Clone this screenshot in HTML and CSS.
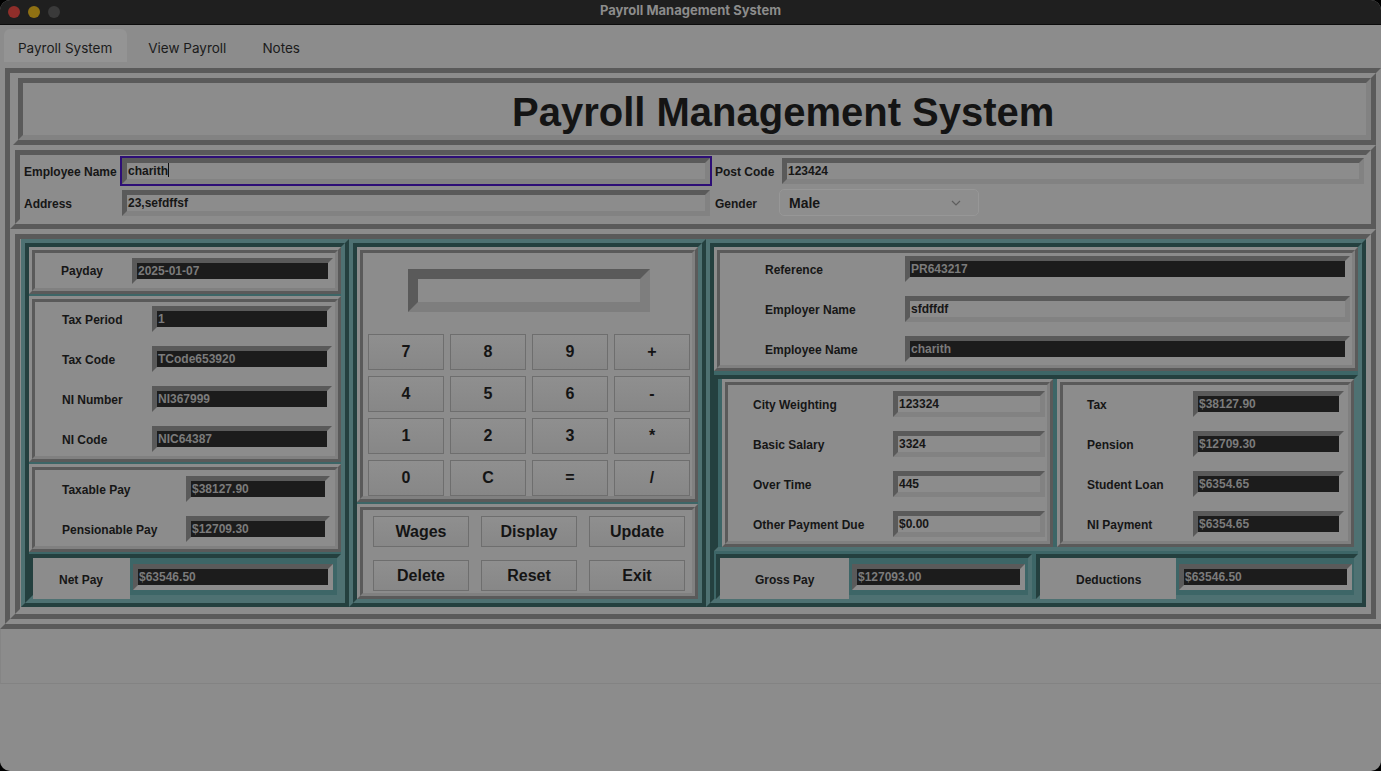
FILE: index.html
```html
<!DOCTYPE html>
<html>
<head>
<meta charset="utf-8">
<title>Payroll Management System</title>
<link rel="stylesheet" href="styles.css">
</head>
<body>
<div class="window">
  <div class="titlebar">
    <div class="lights"><span class="tl tl-red"></span><span class="tl tl-yel"></span><span class="tl tl-gry"></span></div>
    <div class="wtitle">Payroll Management System</div>
  </div>
  <div class="tabs">
    <div class="tab active">Payroll System</div>
    <div class="tab">View Payroll</div>
    <div class="tab">Notes</div>
  </div>
  <div class="main raised"><div class="main-in sunken">
    <div class="hdr raised"><div class="hdr-in sunken"><h1 class="title">Payroll Management System</h1></div></div>

    <div class="emp raised"><div class="emp-in sunken">
      <div class="lbl lbl-a">Employee Name</div>
      <div class="hl focus"><div class="e e-wide">charith<span class="caret"></span></div></div>
      <div class="lbl lbl-b">Post Code</div>
      <div class="hl"><div class="e e-pc">123424</div></div>
      <div class="lbl lbl-a">Address</div>
      <div class="hl"><div class="e e-wide">23,sefdffsf</div></div>
      <div class="lbl lbl-b">Gender</div>
      <div class="combo"><span>Male</span><svg class="chev" width="10" height="6" viewBox="0 0 10 6"><path d="M1 1 L5 5 L9 1" fill="none" stroke="#5e5e5e" stroke-width="1.2"/></svg></div>
    </div></div>

    <div class="lower raised"><div class="lower-in sunken">
      <!-- left column -->
      <div class="col col-left tl-out"><div class="tl-in col-in">
        <div class="sf sf-payday"><div class="sf-in">
          <div class="row r-center"><div class="l lw97">Payday</div><div class="e blk ew201">2025-01-07</div></div>
        </div></div>
        <div class="sf sf-tax"><div class="sf-in">
          <div class="row"><div class="l lw117">Tax Period</div><div class="e blk ew180">1</div></div>
          <div class="row"><div class="l lw117">Tax Code</div><div class="e blk ew180">TCode653920</div></div>
          <div class="row"><div class="l lw117">NI Number</div><div class="e blk ew180">NI367999</div></div>
          <div class="row"><div class="l lw117">NI Code</div><div class="e blk ew180">NIC64387</div></div>
        </div></div>
        <div class="sf sf-taxable"><div class="sf-in pt2">
          <div class="row"><div class="l lw151">Taxable Pay</div><div class="e blk ew144">$38127.90</div></div>
          <div class="row"><div class="l lw151">Pensionable Pay</div><div class="e blk ew144">$12709.30</div></div>
        </div></div>
        <div class="tbox net-left">
          <div class="tlabel lw97">Net Pay</div><div class="e blk ew200">$63546.50</div>
        </div>
      </div></div>

      <!-- middle column -->
      <div class="col col-mid tl-out"><div class="tl-in col-in">
        <div class="sf sf-calc"><div class="sf-in">
          <div class="display"></div>
          <div class="keys">
            <div class="btn">7</div><div class="btn">8</div><div class="btn">9</div><div class="btn">+</div>
            <div class="btn">4</div><div class="btn">5</div><div class="btn">6</div><div class="btn">-</div>
            <div class="btn">1</div><div class="btn">2</div><div class="btn">3</div><div class="btn">*</div>
            <div class="btn">0</div><div class="btn">C</div><div class="btn">=</div><div class="btn">/</div>
          </div>
        </div></div>
        <div class="sf sf-actions"><div class="sf-in">
          <div class="actions">
            <div class="btn abtn">Wages</div><div class="btn abtn">Display</div><div class="btn abtn">Update</div>
            <div class="btn abtn">Delete</div><div class="btn abtn">Reset</div><div class="btn abtn">Exit</div>
          </div>
        </div></div>
      </div></div>

      <!-- right column -->
      <div class="col col-right tl-out"><div class="tl-in col-in">
        <div class="sf sf-ref"><div class="sf-in">
          <div class="row"><div class="l lw185">Reference</div><div class="e blk ew445">PR643217</div></div>
          <div class="row"><div class="l lw185">Employer Name</div><div class="e ew445">sfdffdf</div></div>
          <div class="row"><div class="l lw185">Employee Name</div><div class="e blk ew445">charith</div></div>
        </div></div>
        <div class="tbox pay-box">
          <div class="sf sf-pay1"><div class="sf-in pt2">
            <div class="row"><div class="l lw165">City Weighting</div><div class="e ew152">123324</div></div>
            <div class="row"><div class="l lw165">Basic Salary</div><div class="e ew152">3324</div></div>
            <div class="row"><div class="l lw165">Over Time</div><div class="e ew152">445</div></div>
            <div class="row"><div class="l lw165">Other Payment Due</div><div class="e ew152">$0.00</div></div>
          </div></div>
          <div class="sf sf-pay2"><div class="sf-in pt2">
            <div class="row"><div class="l lw130">Tax</div><div class="e blk ew151">$38127.90</div></div>
            <div class="row"><div class="l lw130">Pension</div><div class="e blk ew151">$12709.30</div></div>
            <div class="row"><div class="l lw130">Student Loan</div><div class="e blk ew151">$6354.65</div></div>
            <div class="row"><div class="l lw130">NI Payment</div><div class="e blk ew151">$6354.65</div></div>
          </div></div>
        </div>
        <div class="totals">
          <div class="tbox gross">
            <div class="tlabel lw129">Gross Pay</div><div class="e blk ew173">$127093.00</div>
          </div>
          <div class="tbox deduct">
            <div class="tlabel lw136">Deductions</div><div class="e blk ew173">$63546.50</div>
          </div>
        </div>
      </div></div>
    </div></div>
  </div></div>
  <div class="status"></div>
</div>
</body>
</html>
```

FILE: styles.css
```css
:root{
  --bg:#8c8c8c;
  --dk:#5a5a5a;
  --lt:#8c8c8c;
  --lt2:#828282;
  --tdk:#24403f;
  --tlt:#4e7172;
  --teal:#3d6667;
}
*{box-sizing:border-box;}
html,body{margin:0;padding:0;}
body{
  width:1381px;height:771px;overflow:hidden;background:#000;
  font-family:"Liberation Sans",Arial,sans-serif;color:#161616;
}
.window{
  width:1381px;height:771px;background:var(--bg);overflow:hidden;
  border-radius:10px;position:relative;
}
.titlebar{
  height:25px;background:#1f1f1f;border-bottom:1px solid #0c0c0c;
  display:flex;align-items:center;position:relative;
}
.lights{display:flex;gap:8px;padding-left:8px;}
.tl{width:12px;height:12px;border-radius:50%;display:block;}
.tl-red{background:#8f2e2a;}
.tl-yel{background:#8f7113;}
.tl-gry{background:#3a3a3a;}
.wtitle{
  position:absolute;left:0;right:0;top:0;height:24px;line-height:20px;
  text-align:center;font-weight:bold;font-size:13px;color:#8c8c8c;
  font-family:Inter,"Liberation Sans",sans-serif;
}
.tabs{height:38px;display:flex;gap:7px;padding:4px 0 0 4px;}
.tab{
  height:33px;line-height:28px;padding:5px 15px 0 14px;font-size:13.5px;color:#1b1b1b;
  font-family:Inter,"Liberation Sans",sans-serif;border-radius:6px 6px 0 0;
}
.tab.active{background:#949494;}

.raised{border:5px solid;border-color:var(--lt) var(--dk) var(--dk) var(--lt);}
.sunken{border:5px solid;border-color:var(--dk) var(--lt) var(--lt) var(--dk);}

.main{width:1386px;height:566px;}
.main-in{height:100%;}
.hdr{width:1363px;height:72px;margin-left:3px;}
.hdr-in{height:100%;border-color:var(--dk) var(--lt2) var(--lt2) var(--dk);}
.title{
  margin:0;padding:6px 0 0 489px;font-size:40px;line-height:46px;font-weight:bold;color:#141414;
  white-space:nowrap;
}

.emp{width:1366px;height:84px;}
.emp-in{
  height:100%;display:grid;grid-template-columns:100px 592px 68px 586px;
  grid-template-rows:30px 30px;row-gap:2px;padding-top:1px;
}
.lbl{font-size:12px;font-weight:bold;line-height:30px;padding-top:1px;white-space:nowrap;}
.lbl-a{padding-left:4px;}
.lbl-b{padding-left:3px;}
.hl{border:2px solid transparent;height:30px;}
.hl.focus{border-color:#2d0e76;}
.e{
  height:26px;border:5px solid;border-color:var(--dk) var(--lt2) var(--lt2) var(--dk);
  font-size:12px;font-weight:bold;line-height:16px;padding-left:1px;color:#161616;
  white-space:nowrap;overflow:hidden;background:var(--bg);flex:none;
}
.e.blk{background:#1c1c1c;color:#7b7b7b;border-right-color:var(--lt);border-bottom-color:var(--lt);}
.caret{display:inline-block;width:1px;height:14px;background:#111;vertical-align:-2px;}
.combo{
  width:200px;height:27px;margin:1px 0 0 -1px;border:1px solid #979797;border-radius:5px;
  background:#8e8e8e;display:flex;align-items:center;justify-content:space-between;
  padding:0 17px 0 9px;font-size:14px;font-weight:bold;
}
.chev{display:block;}

.lower{width:1366px;height:390px;}
.lower-in{height:100%;display:flex;align-items:flex-start;padding-left:1px;}

.tl-out{border:4px solid;border-color:var(--tlt) var(--tdk) var(--tdk) var(--tlt);height:368px;}
.tl-in{border:4px solid;border-color:var(--tdk) var(--tlt) var(--tlt) var(--tdk);height:100%;background:var(--teal);}
.col-left{width:328px;}
.col-mid{width:357px;}
.col-right{width:660px;}
.col-in{display:flex;flex-direction:column;}

.sf{border:3px solid;border-color:var(--lt) var(--dk) var(--dk) var(--lt);background:var(--bg);}
.sf-in{border:3px solid;border-color:var(--dk) #808080 #808080 var(--dk);height:100%;}

.row{display:flex;align-items:flex-start;height:40px;}
.row .e{margin-top:4px;}
.r-center{height:35px;align-items:center;}
.r-center .e{margin-top:0;}
.l{font-size:12px;font-weight:bold;line-height:26px;margin-top:5px;white-space:nowrap;flex:none;}
.r-center .l{margin-top:0;}
.pt2{padding-top:2px;}

.lw97{width:97px;padding-left:26px;}
.lw117{width:117px;padding-left:27px;}
.lw151{width:151px;padding-left:27px;}
.lw185{width:185px;padding-left:45px;}
.lw165{width:165px;padding-left:25px;}
.lw130{width:130px;padding-left:24px;}
.lw129{width:129px;padding-left:35px;}
.lw136{width:136px;padding-left:36px;}
.ew201{width:201px;}
.ew180{width:180px;}
.ew144{width:144px;}
.ew200{width:200px;}
.ew445{width:445px;}
.ew152{width:152px;}
.ew151{width:151px;}
.ew173{width:173px;}

.sf-payday{height:47px;}
.sf-tax{height:166px;margin-top:2px;}
.sf-taxable{height:88px;margin-top:2px;}

.tbox{
  border:4px solid;border-color:var(--tdk) var(--tlt) var(--tlt) var(--tdk);
  background:var(--teal);display:flex;align-items:center;
}
.net-left{height:45px;margin-top:2px;}
.tlabel{
  background:var(--bg);font-size:12px;font-weight:bold;
  white-space:nowrap;flex:none;align-self:stretch;margin-bottom:-4px;
  display:flex;align-items:center;padding-top:3px;
}
.net-left .e{margin-left:3px;}

.sf-calc{height:255px;}
.display{
  width:242px;height:43px;margin:16px 0 0 45px;border:10px solid;
  border-color:var(--dk) #7e7e7e #7e7e7e var(--dk);
}
.keys{
  display:grid;grid-template-columns:repeat(4,76px);grid-auto-rows:36px;gap:6px;
  margin:22px 0 0 5px;
}
.btn{
  border:1px solid #6e6e6e;background:linear-gradient(#8f8f8f,#878787);
  display:flex;align-items:center;justify-content:center;
  font-size:16px;font-weight:bold;color:#141414;
}
.sf-actions{height:95px;margin-top:2px;}
.actions{
  display:grid;grid-template-columns:repeat(3,96px);grid-auto-rows:31px;column-gap:12px;row-gap:13px;
  padding:6px 0 0 10px;
}

.sf-ref{height:124px;}
.sf-ref .row .e{margin-top:3px;}
.sf-ref .row .l{margin-top:4px;}
.pay-box{height:176px;margin-top:4px;padding-left:4px;gap:4px;align-items:stretch;}
.sf-pay1{width:331px;}
.sf-pay2{width:297px;}
.totals{display:flex;gap:4px;margin-top:3px;padding-left:2px;}
.gross{width:317px;height:45px;}
.deduct{width:323px;height:45px;}
.gross .e,.deduct .e{margin-left:3px;}

.status{
  height:55px;border-left:1px solid #858585;border-bottom:1px solid #838383;
}
```
